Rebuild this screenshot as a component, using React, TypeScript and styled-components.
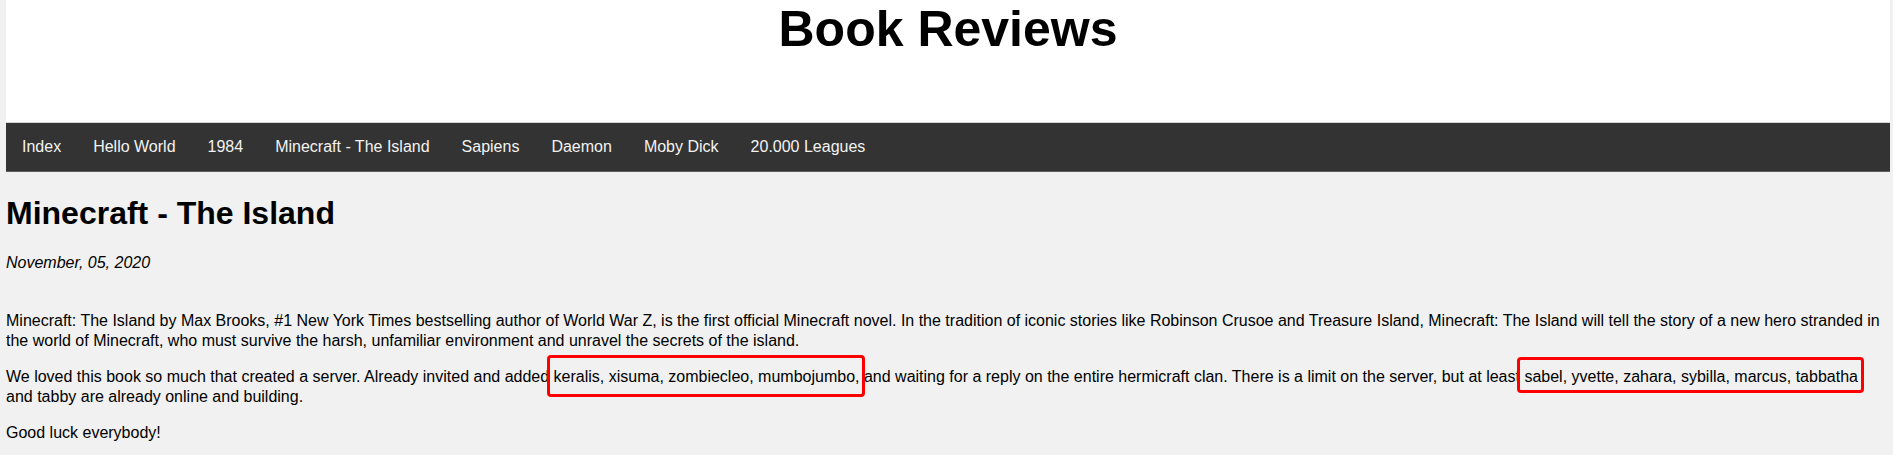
import React from "react";
import styled, { createGlobalStyle } from "styled-components";

const GlobalStyle = createGlobalStyle`
  html, body {
    margin: 0;
    padding: 0;
    background: #f1f1f1;
  }
  body {
    font-family: "Liberation Sans", Arial, Helvetica, sans-serif;
    font-size: 16px;
    line-height: 20px;
    color: #000;
  }
`;

const Page = styled.div`
  padding: 0 3px 0 6px;
`;

const Header = styled.header`
  background: #ffffff;
  height: 122px;
  text-align: center;
`;

const SiteTitle = styled.h1`
  margin: 0;
  font-size: 50px;
  line-height: normal;
  font-weight: bold;
`;

const Nav = styled.nav`
  display: flex;
  background: #333333;
  border-top: 1px solid #d4d4d4;
  border-bottom: 1px solid #5c5c5c;
  height: 48px;
`;

const NavLink = styled.a`
  display: block;
  color: #f2f2f2;
  text-decoration: none;
  padding: 14px 16px;
  line-height: 20px;
  font-size: 16px;
`;

const Main = styled.main`
  padding-right: 4px;
`;

const Title = styled.h1`
  font-size: 32px;
  line-height: 40px;
  margin: 21px 0 20px;
`;

const DateLine = styled.p`
  font-style: italic;
  margin: 0 0 38px;
`;

const Para = styled.p`
  margin: 16px 0;
`;

const Mark = styled.span<{ $top: number; $bottom: number }>`
  position: relative;

  &::after {
    content: "";
    position: absolute;
    left: -7px;
    right: -6px;
    top: ${(p) => p.$top}px;
    bottom: ${(p) => p.$bottom}px;
    border: 3px solid #ff0000;
    border-radius: 4px;
    pointer-events: none;
  }
`;

const links = [
  "Index",
  "Hello World",
  "1984",
  "Minecraft - The Island",
  "Sapiens",
  "Daemon",
  "Moby Dick",
  "20.000 Leagues",
];

export default function App() {
  return (
    <Page>
      <GlobalStyle />
      <Header>
        <SiteTitle>Book Reviews</SiteTitle>
      </Header>
      <Nav>
        {links.map((l) => (
          <NavLink key={l} href="#">
            {l}
          </NavLink>
        ))}
      </Nav>
      <Main>
        <Title>Minecraft - The Island</Title>
        <DateLine>November, 05, 2020</DateLine>
        <Para>
          Minecraft: The Island by Max Brooks, #1 New York Times bestselling author of World War Z, is the first
          official Minecraft novel. In the tradition of iconic stories like Robinson Crusoe and Treasure Island,
          Minecraft: The Island will tell the story of a new hero stranded in the world of Minecraft, who must
          survive the harsh, unfamiliar environment and unravel the secrets of the island.
        </Para>
        <Para>
          We loved this book so much that created a server. Already invited and added{" "}
          <Mark $top={-13} $bottom={-12}>keralis, xisuma, zombiecleo, mumbojumbo,</Mark> and waiting for a reply on
          the entire hermicraft clan. There is a limit on the server, but at least{" "}
          <Mark $top={-11} $bottom={-8}>sabel, yvette, zahara, sybilla, marcus, tabbatha</Mark> and tabby are already
          online and building.
        </Para>
        <Para>Good luck everybody!</Para>
      </Main>
    </Page>
  );
}
